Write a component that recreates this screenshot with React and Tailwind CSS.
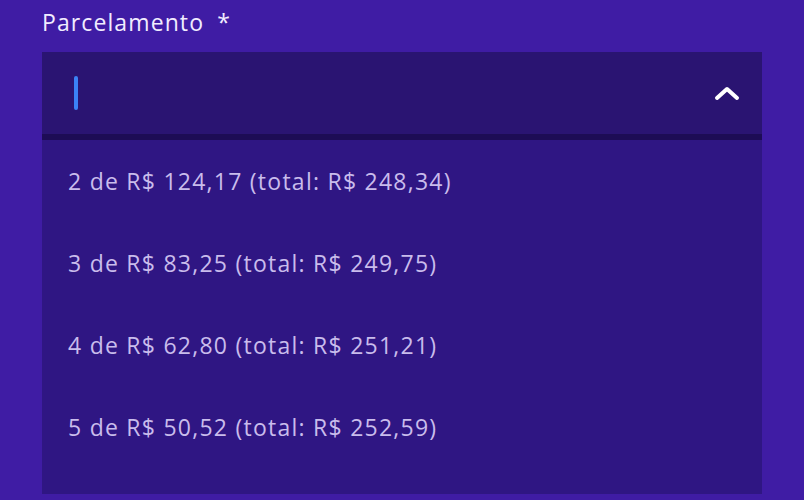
import React from 'react';

const options = [
  '2 de R$ 124,17 (total: R$ 248,34)',
  '3 de R$ 83,25 (total: R$ 249,75)',
  '4 de R$ 62,80 (total: R$ 251,21)',
  '5 de R$ 50,52 (total: R$ 252,59)',
];

export default function App() {
  return (
    <div
      className="w-[804px] h-[500px] overflow-hidden bg-[#3f1ca4] pl-[42px] pt-[6px]"
      style={{ fontFamily: '"Open Sans", "Noto Sans", sans-serif' }}
    >
      <label className="block text-[23px] leading-[32px] text-[#f1ecff] tracking-[1.1px]">
        Parcelamento <span className="ml-[6px]">*</span>
      </label>

      <div className="relative mt-[14px] w-[720px]">
        {/* select field */}
        <div className="flex items-center justify-between h-[88px] bg-[#2a1472] border-b-[6px] border-[#1d0c55] pl-[32px] pr-[22px]">
          <span className="block w-[4px] h-[34px] rounded-full bg-[#3b82f6]" />
          <svg width="26" height="16" viewBox="0 0 26 16" fill="none">
            <path d="M3 13 L13 4 L23 13" stroke="#ffffff" strokeWidth="4" strokeLinecap="round" strokeLinejoin="round" />
          </svg>
        </div>

        {/* options list */}
        <ul className="h-[354px] overflow-hidden bg-[#2f1683]">
          {options.map((opt) => (
            <li key={opt} className="flex items-center h-[82px] pl-[26px] text-[23px] tracking-[1.25px] text-[#c9bcec]">
              {opt}
            </li>
          ))}
        </ul>
      </div>
    </div>
  );
}
